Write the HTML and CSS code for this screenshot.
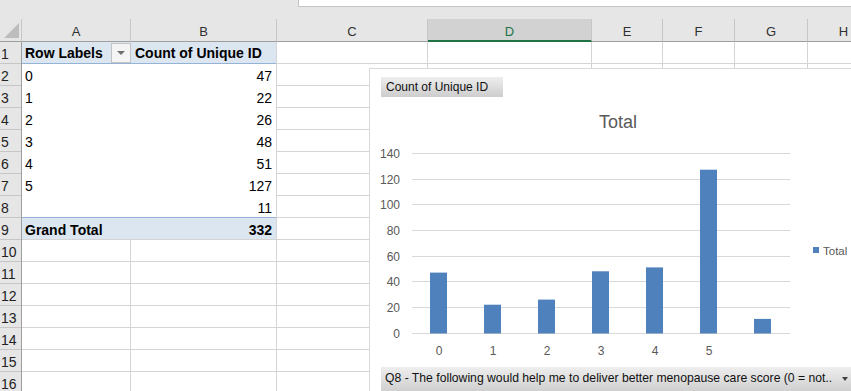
FILE: index.html
```html
<!DOCTYPE html>
<html>
<head>
<meta charset="utf-8">
<link rel="stylesheet" href="styles.css">
</head>
<body>
<div class="topband"><div class="formulabar"></div></div>
<div class="colheads">
  <div class="corner"><span class="corner-tri"></span></div>
  <div class="ch w-a">A</div>
  <div class="ch w-b">B</div>
  <div class="ch w-c">C</div>
  <div class="ch w-d sel">D</div>
  <div class="ch w-e">E</div>
  <div class="ch w-f">F</div>
  <div class="ch w-g">G</div>
  <div class="ch w-h">H</div>
</div>
<div class="sheet">
  <div class="rowheads">
    <div class="rh">1</div><div class="rh">2</div><div class="rh">3</div><div class="rh">4</div>
    <div class="rh">5</div><div class="rh">6</div><div class="rh">7</div><div class="rh">8</div>
    <div class="rh">9</div><div class="rh">10</div><div class="rh">11</div><div class="rh">12</div>
    <div class="rh">13</div><div class="rh">14</div><div class="rh">15</div><div class="rh">16</div>
  </div>
  <div class="cells">
    <div class="pivot">
      <div class="prow phead">
        <div class="pa bold">Row Labels<span class="filterbtn"><span class="tri"></span></span></div>
        <div class="pb bold">Count of Unique ID</div>
      </div>
      <div class="prow"><div class="pa">0</div><div class="pb num">47</div></div>
      <div class="prow"><div class="pa">1</div><div class="pb num">22</div></div>
      <div class="prow"><div class="pa">2</div><div class="pb num">26</div></div>
      <div class="prow"><div class="pa">3</div><div class="pb num">48</div></div>
      <div class="prow"><div class="pa">4</div><div class="pb num">51</div></div>
      <div class="prow"><div class="pa">5</div><div class="pb num">127</div></div>
      <div class="prow plast"><div class="pa"></div><div class="pb num">11</div></div>
      <div class="prow ptotal"><div class="pa bold">Grand Total</div><div class="pb num bold">332</div></div>
    </div>
  </div>
</div>

<div class="chart">
  <div class="fieldbtn topbtn">Count of Unique ID</div>
  <svg class="plot" width="481" height="270" viewBox="0 0 481 270">
    <text class="title" x="248" y="31" text-anchor="middle">Total</text>
    <g class="grid">
      <line x1="42" x2="420" y1="56.5" y2="56.5"/>
      <line x1="42" x2="420" y1="82.5" y2="82.5"/>
      <line x1="42" x2="420" y1="107.5" y2="107.5"/>
      <line x1="42" x2="420" y1="133.5" y2="133.5"/>
      <line x1="42" x2="420" y1="159.5" y2="159.5"/>
      <line x1="42" x2="420" y1="184.5" y2="184.5"/>
      <line x1="42" x2="420" y1="210.5" y2="210.5"/>
      <line x1="42" x2="420" y1="236.5" y2="236.5"/>
    </g>
    <g class="ylab" text-anchor="end">
      <text x="30" y="61">140</text>
      <text x="30" y="87">120</text>
      <text x="30" y="112">100</text>
      <text x="30" y="138">80</text>
      <text x="30" y="164">60</text>
      <text x="30" y="189">40</text>
      <text x="30" y="215">20</text>
      <text x="30" y="241">0</text>
    </g>
    <g class="bars">
      <rect x="60" y="175.6" width="17" height="60.9"/>
      <rect x="114" y="207.7" width="17" height="28.8"/>
      <rect x="168" y="202.6" width="17" height="33.9"/>
      <rect x="222" y="174.3" width="17" height="62.2"/>
      <rect x="276" y="170.4" width="17" height="66.1"/>
      <rect x="330" y="72.7" width="17" height="163.8"/>
      <rect x="384" y="221.9" width="17" height="14.6"/>
    </g>
    <g class="xlab" text-anchor="middle">
      <text x="69" y="258">0</text>
      <text x="123" y="258">1</text>
      <text x="177" y="258">2</text>
      <text x="231" y="258">3</text>
      <text x="285" y="258">4</text>
      <text x="339" y="258">5</text>
    </g>
    <rect class="legend-key" x="443" y="150" width="6" height="6"/>
    <text class="legend" x="453" y="158">Total</text>
  </svg>
  <div class="fieldbtn botbtn"><span class="btxt">Q8 - The following would help me to deliver better menopause care score (0 = not..</span><span class="tri small"></span></div>
</div>
</body>
</html>
```

FILE: styles.css
```css
* { box-sizing: border-box; }
html, body { margin: 0; padding: 0; }
body {
  width: 851px;
  height: 391px;
  overflow: hidden;
  background: #ffffff;
  font-family: "Liberation Sans", Arial, sans-serif;
  color: #000;
  position: relative;
}

.topband {
  height: 19px;
  background: #e6e6e6;
  padding-left: 298px;
}
.formulabar {
  height: 7px;
  background: #ffffff;
  border-left: 1px solid #c6c6c6;
  border-bottom: 1px solid #c6c6c6;
}

.colheads {
  display: flex;
  height: 23px;
  background: #e6e6e6;
  width: 900px;
}
.corner {
  width: 22px;
  flex: none;
  border-right: 1px solid #c6c6c6;
  border-bottom: 1px solid #9e9e9e;
  display: flex;
  align-items: flex-end;
  justify-content: flex-end;
  padding: 0 2px 3px 0;
}
.corner-tri {
  width: 0;
  height: 0;
  border-left: 15px solid transparent;
  border-bottom: 15px solid #bdbdbd;
}
.ch {
  flex: none;
  border-right: 1px solid #c6c6c6;
  border-bottom: 1px solid #9e9e9e;
  font-size: 13px;
  line-height: 23px;
  padding-top: 1px;
  text-align: center;
  color: #303030;
}
.ch.sel {
  background: #d2d2d2;
  border-bottom: 2px solid #217346;
  color: #217346;
}
.w-a { width: 109px; }
.w-b { width: 146px; }
.w-c { width: 151px; }
.w-d { width: 164px; }
.w-e { width: 71px; }
.w-f { width: 72px; }
.w-g { width: 73px; }
.w-h { width: 72px; }

.sheet {
  display: flex;
  height: 360px;
}
.rowheads {
  width: 22px;
  flex: none;
  background: #e6e6e6;
  border-right: 1px solid #9e9e9e;
}
.rh {
  height: 22px;
  border-bottom: 1px solid #c6c6c6;
  font-size: 14px;
  line-height: 16px;
  padding: 4px 0 0 1px;
  color: #222;
}
.cells {
  flex: 1;
  background-color: #fff;
  background-image:
    linear-gradient(#d4d4d4, #d4d4d4),
    linear-gradient(#d4d4d4, #d4d4d4),
    linear-gradient(#d4d4d4, #d4d4d4),
    linear-gradient(#d4d4d4, #d4d4d4),
    linear-gradient(#d4d4d4, #d4d4d4),
    linear-gradient(#d4d4d4, #d4d4d4),
    linear-gradient(#d4d4d4, #d4d4d4),
    repeating-linear-gradient(to bottom, transparent 0 21px, #d4d4d4 21px 22px);
  background-repeat: no-repeat, no-repeat, no-repeat, no-repeat, no-repeat, no-repeat, no-repeat, repeat;
  background-size: 1px 100%, 1px 100%, 1px 100%, 1px 100%, 1px 100%, 1px 100%, 1px 100%, 100% 22px;
  background-position: 108px 0, 254px 0, 405px 0, 569px 0, 640px 0, 712px 0, 785px 0, 0 0;
}

.pivot {
  width: 254px;
  background: #fff;
}
.prow {
  display: flex;
  height: 22px;
  font-size: 14px;
  line-height: 16px;
}
.phead {
  background: #dce6f1;
  border-bottom: 1px solid #95b3d7;
}
.plast { border-bottom: 1px solid #95b3d7; }
.ptotal {
  height: 21px;
  background: #dce6f1;
}
.pa {
  width: 109px;
  flex: none;
  padding: 4px 0 0 3px;
  display: flex;
  align-items: flex-start;
  white-space: nowrap;
}
.pb {
  width: 145px;
  flex: none;
  padding: 4px 0 0 4px;
  white-space: nowrap;
}
.pb.num {
  text-align: right;
  padding: 4px 4px 0 0;
}
.bold { font-weight: bold; }
.phead .pa { padding-top: 3px; }
.phead .pb { padding-top: 3px; }

.filterbtn {
  margin-left: auto;
  margin-top: -2px;
  width: 20px;
  height: 20px;
  border: 1px solid #c3c3c3;
  background: #f4f4f4;
  display: flex;
  align-items: center;
  justify-content: center;
}
.tri {
  width: 0;
  height: 0;
  border-left: 4px solid transparent;
  border-right: 4px solid transparent;
  border-top: 4px solid #707070;
}
.tri.small {
  border-left-width: 3px;
  border-right-width: 3px;
  border-top: 4px solid #404040;
}

.chart {
  position: absolute;
  left: 369px;
  top: 68px;
  width: 500px;
  height: 340px;
  background: #fff;
  border: 1px solid #d9d9d9;
  padding-left: 11px;
}
.fieldbtn {
  background: linear-gradient(#eeeeee, #cdcdcd);
  color: #111;
  font-size: 12px;
  white-space: nowrap;
}
.topbtn {
  margin-top: 8px;
  width: 122px;
  height: 20px;
  line-height: 20px;
  padding-left: 5px;
}
.plot {
  display: block;
  margin-left: -11px;
  font-family: "Liberation Sans", Arial, sans-serif;
}
.title { font-size: 18px; fill: #595959; }
.grid line { stroke: #d9d9d9; stroke-width: 1; }
.ylab text, .xlab text { font-size: 12px; fill: #595959; }
.bars rect { fill: #4f81bd; }
.legend-key { fill: #4f81bd; }
.legend { font-size: 11.5px; fill: #595959; }
.botbtn {
  width: 471px;
  height: 26px;
  display: flex;
  align-items: flex-start;
  justify-content: space-between;
  padding: 4px 4px 0 4px;
  font-size: 12.2px;
  line-height: 14px;
}
.btxt { flex: none; }
.botbtn .tri { margin-top: 6px; }
```
